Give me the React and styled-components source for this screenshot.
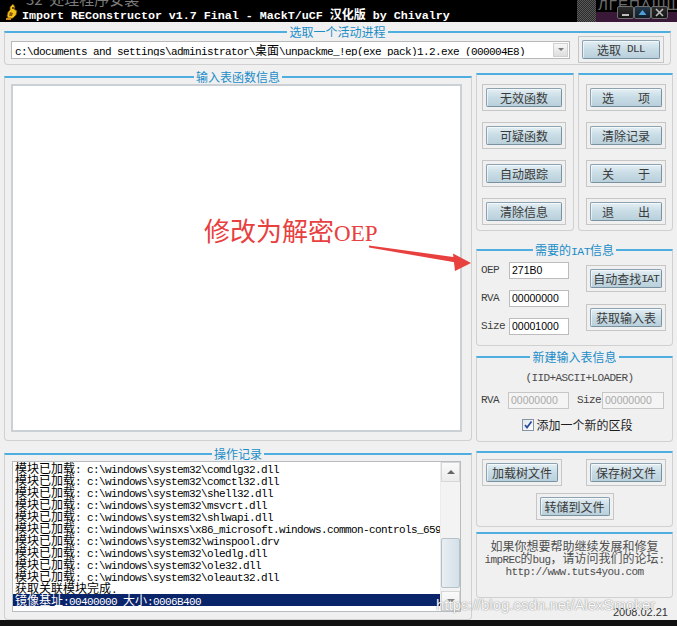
import React from 'react';
import styled, { createGlobalStyle } from 'styled-components';

const CJK = `"Noto Sans CJK SC", "Liberation Sans", sans-serif`;
const MONO = `"Liberation Mono", "Noto Sans CJK SC", monospace`;

const Global = createGlobalStyle`
  html, body { margin: 0; padding: 0; background: #f0f0f0; }
  body { width: 677px; height: 626px; overflow: hidden; font-family: ${CJK}; font-size: 12px; }
  * { box-sizing: border-box; }
`;

const CjkRun = styled.span`
  font-family: ${CJK};
  font-size: ${p => p.$size}px;
`;
const LatinRun = styled.span`
  font-family: ${MONO};
  font-size: ${p => p.$size}px;
  letter-spacing: ${p => (p.$adv - p.$size * 0.6).toFixed(2)}px;
  white-space: pre;
`;

const CJK_RE = /([\u2E80-\u9FFF\uFF00-\uFFEF\u3000-\u303F]+)/;
function Mixed({ text, cjkSize = 12, latinSize = 11, adv = 6 }) {
  return text
    .split(CJK_RE)
    .filter(Boolean)
    .map((part, i) =>
      CJK_RE.test(part) ? (
        <CjkRun key={i} $size={cjkSize}>{part}</CjkRun>
      ) : (
        <LatinRun key={i} $size={latinSize} $adv={adv}>{part}</LatinRun>
      )
    );
}

const Root = styled.div`
  position: relative;
  width: 677px;
  height: 626px;
  overflow: hidden;
  background: #f0f0f0;
  display: flex;
  flex-direction: column;
  font-size: 12px;
`;

/* ---------- title bar ---------- */
const TitleBar = styled.header`
  position: relative;
  flex: 0 0 22px;
  height: 22px;
  background: #000;
  display: flex;
  align-items: center;
  padding: 5px 0 0 5px;
  overflow: hidden;
`;
const Ghost = styled.span`
  position: absolute;
  left: 26px;
  top: -9px;
  color: #7c7c7c;
  font-family: ${CJK};
  font-size: 15px;
  line-height: 16px;
  white-space: pre;
`;
const IconWrap = styled.span`
  align-self: flex-start;
  margin-top: -1px;
  width: 14px;
  height: 16px;
  display: flex;
  position: relative;
`;
const TitleText = styled.h1`
  position: relative;
  margin: 0 0 0 3px;
  color: #fff;
  font-weight: bold;
  font-size: 12px;
  height: 12px;
  line-height: 12px;
  white-space: nowrap;
`;
const BgChecker = styled.span`
  position: absolute;
  left: 577px;
  top: 0;
  width: 19px;
  height: 22px;
  background-image: repeating-conic-gradient(#5a5a5a 0% 25%, #2a2a2a 0% 50%);
  background-size: 2px 2px;
`;
const BgPurple = styled.span`
  position: absolute;
  left: 596px;
  top: 0;
  width: 81px;
  height: 22px;
  background: linear-gradient(#000 0 12px, #3a1838 12px);
  color: #6d6d6d;
  font-family: "Liberation Sans", sans-serif;
  font-size: 15px;
  line-height: 10px;
  letter-spacing: 1px;
  padding-left: 2px;
  overflow: hidden;
  white-space: nowrap;
`;
const WinButtons = styled.div`
  position: absolute;
  left: 617px;
  top: 6px;
  display: flex;
`;
const WinBtn = styled.span`
  width: 17px;
  height: 13px;
  border: 1px solid #6e6e6e;
  border-radius: 2px;
  background: ${p => (p.$blue ? 'linear-gradient(#22384a,#0f1c28)' : 'linear-gradient(#2c2c2c,#141414)')};
  display: flex;
  align-items: center;
  justify-content: center;
`;

/* ---------- body & groups ---------- */
const Body = styled.main`
  flex: 1;
  display: flex;
  flex-direction: column;
  padding: 9px 0 0 4px;
`;
const Group = styled.section`
  width: ${p => (p.$w ? `${p.$w}px` : 'auto')};
  height: ${p => p.$h}px;
  border: 1px solid #d0d0d0;
  border-top: 2px solid #4faee0;
  border-radius: 0 0 4px 4px;
  display: flex;
  flex-direction: column;
  flex-shrink: 0;
  margin-top: ${p => p.$mt || 0}px;
`;
const Legend = styled.h2`
  position: relative;
  margin: -8px auto -6px;
  height: 14px;
  line-height: 14px;
  padding: 0 2px;
  background: #f0f0f0;
  color: #1b8dc8;
  font-family: ${CJK};
  font-size: 12px;
  font-weight: normal;
  white-space: nowrap;
`;

const ProcRow = styled.div`
  display: flex;
  align-items: center;
  justify-content: space-between;
  padding: 3px 6px 0 6px;
`;
const Combo = styled.div`
  width: 559px;
  height: 18px;
  background: #fff;
  border: 1px solid #b8b8b8;
  display: flex;
  align-items: center;
  padding-left: 3px;
`;
const ComboText = styled.div`
  flex: 1;
  height: 12px;
  line-height: 12px;
  font-size: 12px;
  white-space: nowrap;
  overflow: hidden;
  color: #000;
`;
const ComboArrow = styled.div`
  width: 15px;
  height: 14px;
  margin-right: 1px;
  border: 1px solid #d0d0d0;
  background: linear-gradient(#f7f7f7, #dedede);
  display: flex;
  align-items: center;
  justify-content: center;
  &::after {
    content: '';
    border-left: 3px solid transparent;
    border-right: 3px solid transparent;
    border-top: 3px solid #7a7a7a;
  }
`;

const BtnFrame = styled.div`
  display: flex;
  width: fit-content;
  padding: 3px;
  border: 1px solid #c6c6c6;
  background: #f0f0f0;
`;
const Btn = styled.button`
  width: ${p => p.$w}px;
  height: 19px;
  margin: 0;
  padding: 0;
  border: 1px solid #8ca2b0;
  border-right-color: #7892a2;
  border-bottom-color: #7892a2;
  border-radius: 2px;
  background: linear-gradient(#e4eff4, #cadde6 45%, #b9d0db);
  box-shadow: inset 1px 1px 0 rgba(255, 255, 255, 0.6);
  color: #3a3a3a;
  font-family: ${CJK};
  font-size: 12px;
  line-height: 17px;
  white-space: pre;
  display: flex;
  align-items: center;
  justify-content: center;
  cursor: default;
`;

const Main = styled.div`
  display: grid;
  grid-template-columns: 468px 197px;
  column-gap: 4px;
  margin-top: 8px;
  align-items: start;
`;
const LeftCol = styled.div`
  display: flex;
  flex-direction: column;
  padding-top: 3px;
`;
const RightCol = styled.div`
  display: flex;
  flex-direction: column;
`;

const TreeArea = styled.div`
  margin: 6px 9px 0 6px;
  height: 348px;
  background: #fff;
  border: 2px solid #cbd0d4;
`;

/* ---------- log ---------- */
const LogBox = styled.div`
  margin: 6px 10px 0 7px;
  height: 151px;
  border: 1px solid #b7bcc1;
  background: #fff;
  display: flex;
`;
const LogLines = styled.div`
  flex: 1;
  overflow: hidden;
  display: flex;
  flex-direction: column;
`;
const LogLine = styled.div`
  height: 12px;
  line-height: 12px;
  font-size: 12px;
  padding-left: 2px;
  white-space: nowrap;
  color: ${p => (p.$sel ? '#fff' : '#000')};
  background: ${p => (p.$sel ? '#0a246a' : 'transparent')};
`;
const ScrollBar = styled.div`
  width: 20px;
  display: flex;
  flex-direction: column;
  background: #f3f3f3;
  border-left: 1px solid #ececec;
`;
const ScrollBtn = styled.div`
  height: 20px;
  border: 1px solid #d7d7d7;
  background: linear-gradient(#fafafa, #ececec);
  display: flex;
  align-items: center;
  justify-content: center;
  &::after {
    content: '';
    border-left: 4px solid transparent;
    border-right: 4px solid transparent;
    ${p => (p.$up ? 'border-bottom: 4px solid #666;' : 'border-top: 4px solid #888;')}
  }
`;
const ScrollTrack = styled.div`
  flex: 1;
  display: flex;
  flex-direction: column;
  padding-top: 56px;
`;
const Thumb = styled.div`
  height: 50px;
  border: 1px solid #b3c1cb;
  border-radius: 2px;
  background: linear-gradient(90deg, #e9eff3, #d4e0e8);
`;

/* ---------- right column parts ---------- */
const ButtonsRow = styled.div`
  display: flex;
  gap: 4px;
`;
const BtnStack = styled.div`
  display: flex;
  flex-direction: column;
  gap: 11px;
  padding: 9px 0 0 ${p => p.$pl}px;
`;

const IatBody = styled.div`
  display: flex;
  justify-content: space-between;
  padding: 0 6px 0 4px;
`;
const FieldCol = styled.div`
  display: flex;
  flex-direction: column;
  gap: 11px;
  padding-top: 11px;
`;
const BtnCol = styled.div`
  display: flex;
  flex-direction: column;
  gap: 12px;
  padding-top: 14px;
`;
const FieldRow = styled.div`
  display: flex;
  align-items: flex-start;
`;
const Label = styled.span`
  width: ${p => p.$w}px;
  margin-left: ${p => p.$ml || 0}px;
  height: 14px;
  line-height: 12px;
  padding-top: ${p => p.$pt || 0}px;
  font-family: ${MONO};
  font-size: 11px;
  letter-spacing: -0.6px;
  color: #3e3e3e;
  white-space: pre;
`;
const Field = styled.div`
  width: ${p => p.$w}px;
  height: 17px;
  border: 1px solid ${p => (p.$disabled ? '#c6c6c6' : '#bcbcbc')};
  background: ${p => (p.$disabled ? '#f4f4f4' : '#fff')};
  color: ${p => (p.$disabled ? '#a9a9a9' : '#000')};
  font-family: "Liberation Sans", sans-serif;
  font-size: 10.5px;
  line-height: 15px;
  padding-left: 2px;
  white-space: nowrap;
`;

const SubNote = styled.div`
  margin-top: 14px;
  height: 12px;
  line-height: 12px;
  text-align: center;
  padding-left: 10px;
  font-family: ${MONO};
  font-size: 11px;
  letter-spacing: -0.6px;
  color: #4a4a4a;
`;
const NewRow = styled.div`
  display: flex;
  align-items: center;
  padding-left: 4px;
  margin-top: 8px;
`;
const CheckRow = styled.label`
  display: flex;
  align-items: center;
  justify-content: center;
  gap: 2px;
  margin-top: 9px;
  padding-left: 6px;
  height: 13px;
  font-family: ${CJK};
  font-size: 12px;
  line-height: 12px;
  color: #1e1e1e;
`;

const TreeRow = styled.div`
  display: flex;
  justify-content: space-between;
  padding: 6px 6px 0 5px;
`;
const TreeRowCenter = styled.div`
  display: flex;
  justify-content: center;
  margin-top: 7px;
`;

const InfoText = styled.div`
  padding-top: 6px;
  display: flex;
  flex-direction: column;
  align-items: center;
  color: #4e4e4e;
`;
const InfoLine = styled.div`
  height: 12px;
  line-height: 12px;
  font-size: 12px;
  white-space: nowrap;
`;
const DateRow = styled.div`
  margin-top: 8px;
  height: 12px;
  line-height: 12px;
  text-align: right;
  padding-right: 5px;
  font-family: "Liberation Sans", sans-serif;
  font-size: 11px;
  color: #333;
`;

const BottomStrip = styled.footer`
  flex: 0 0 6px;
  background: #111;
`;

/* ---------- overlays ---------- */
const Annotation = styled.div`
  position: absolute;
  left: 204px;
  top: 216px;
  color: #e8403e;
  height: 28px;
  line-height: 28px;
  font-size: 26px;
  white-space: nowrap;
`;
const AnnoCjk = styled.span`
  font-family: ${CJK};
  font-size: 26px;
`;
const AnnoLatin = styled.span`
  font-family: "Liberation Serif", serif;
  font-size: 23px;
`;
const ArrowSvg = styled.svg`
  position: absolute;
  left: 0;
  top: 0;
  pointer-events: none;
`;
const Watermark = styled.div`
  position: absolute;
  left: 436px;
  top: 596px;
  font-family: "Liberation Sans", sans-serif;
  font-size: 15px;
  line-height: 18px;
  color: rgba(255, 255, 255, 0.95);
  text-shadow: 0 0 1px rgba(90, 90, 90, 0.7), 0 0 2px rgba(0, 0, 0, 0.2);
  white-space: nowrap;
  pointer-events: none;
`;

function AppIcon() {
  return (
    <IconWrap>
      <svg width="14" height="16" viewBox="0 0 14 16">
        <path d="M8 0 L10 3 L9 5 L12 7 L11 11 L8 14 L4 15 L2 12 L3 8 L5 6 L5 3 Z" fill="#f2c21b" stroke="#6b4a08" strokeWidth="0.8" />
        <path d="M5 8 L8 9 L7 12 L4 12 Z" fill="#8a5a16" />
        <circle cx="8" cy="4" r="1" fill="#3a2a08" />
        <path d="M1 14 L6 13 L6 16 L1 16 Z" fill="#c98a1a" />
      </svg>
    </IconWrap>
  );
}

const logs = [
  '模块已加载: c:\\windows\\system32\\comdlg32.dll',
  '模块已加载: c:\\windows\\system32\\comctl32.dll',
  '模块已加载: c:\\windows\\system32\\shell32.dll',
  '模块已加载: c:\\windows\\system32\\msvcrt.dll',
  '模块已加载: c:\\windows\\system32\\shlwapi.dll',
  '模块已加载: c:\\windows\\winsxs\\x86_microsoft.windows.common-controls_6595b64144ccf1df_6.0.2600.5512_x-ww_35d4ce83\\comctl32.dll',
  '模块已加载: c:\\windows\\system32\\winspool.drv',
  '模块已加载: c:\\windows\\system32\\oledlg.dll',
  '模块已加载: c:\\windows\\system32\\ole32.dll',
  '模块已加载: c:\\windows\\system32\\oleaut32.dll',
  '获取关联模块完成.',
];

export default function App() {
  return (
    <>
      <Global />
      <Root>
        <TitleBar>
          <Ghost>32  处理程序安装</Ghost>
          <AppIcon />
          <TitleText>
            <Mixed text="Import REConstructor v1.7 Final - MackT/uCF 汉化版 by Chivalry" latinSize={11.7} cjkSize={12} adv={7} />
          </TitleText>
          <BgChecker />
          <BgPurple>ЛГЕПАШШ</BgPurple>
          <WinButtons>
            <WinBtn>
              <svg width="9" height="9" viewBox="0 0 9 9"><rect x="1" y="6" width="7" height="2" fill="#bdbdbd" /></svg>
            </WinBtn>
            <WinBtn $blue>
              <svg width="9" height="9" viewBox="0 0 9 9"><path d="M0.5 7 L4.5 2 L8.5 7 Z" fill="#4f9fd8" /></svg>
            </WinBtn>
            <WinBtn>
              <svg width="9" height="9" viewBox="0 0 9 9"><path d="M1 1 L8 8 M8 1 L1 8" stroke="#bdbdbd" strokeWidth="1.6" /></svg>
            </WinBtn>
          </WinButtons>
        </TitleBar>

        <Body>
          <Group $w={667} $h={34}>
            <Legend>选取一个活动进程</Legend>
            <ProcRow>
              <Combo>
                <ComboText>
                  <Mixed text="c:\documents and settings\administrator\桌面\unpackme_!ep(exe pack)1.2.exe (000004E8)" />
                </ComboText>
                <ComboArrow />
              </Combo>
              <BtnFrame>
                <Btn $w={78}><Mixed text="选取 DLL" /></Btn>
              </BtnFrame>
            </ProcRow>
          </Group>

          <Main>
            <LeftCol>
              <Group $h={365}>
                <Legend>输入表函数信息</Legend>
                <TreeArea />
              </Group>
              <Group $h={167} $mt={12}>
                <Legend>操作记录</Legend>
                <LogBox>
                  <LogLines>
                    {logs.map((l, i) => (
                      <LogLine key={i}><Mixed text={l} /></LogLine>
                    ))}
                    <LogLine $sel><Mixed text="镜像基址:00400000 大小:0006B400" /></LogLine>
                  </LogLines>
                  <ScrollBar>
                    <ScrollBtn $up />
                    <ScrollTrack><Thumb /></ScrollTrack>
                    <ScrollBtn />
                  </ScrollBar>
                </LogBox>
              </Group>
            </LeftCol>

            <RightCol>
              <ButtonsRow>
                <Group $w={98} $h={158}>
                  <BtnStack $pl={5}>
                    {['无效函数', '可疑函数', '自动跟踪', '清除信息'].map(t => (
                      <BtnFrame key={t}><Btn $w={76}>{t}</Btn></BtnFrame>
                    ))}
                  </BtnStack>
                </Group>
                <Group $w={95} $h={158}>
                  <BtnStack $pl={7}>
                    {['选　　项', '清除记录', '关　　于', '退　　出'].map(t => (
                      <BtnFrame key={t}><Btn $w={72}>{t}</Btn></BtnFrame>
                    ))}
                  </BtnStack>
                </Group>
              </ButtonsRow>

              <Group $h={97} $mt={18}>
                <Legend><Mixed text="需要的IAT信息" latinSize={11.5} adv={6.3} /></Legend>
                <IatBody>
                  <FieldCol>
                    <FieldRow><Label $w={28} $pt={2}>OEP</Label><Field $w={60}>271B0</Field></FieldRow>
                    <FieldRow><Label $w={28} $pt={2}>RVA</Label><Field $w={60}>00000000</Field></FieldRow>
                    <FieldRow><Label $w={28} $pt={2}>Size</Label><Field $w={60}>00001000</Field></FieldRow>
                  </FieldCol>
                  <BtnCol>
                    <BtnFrame><Btn $w={72}><Mixed text="自动查找IAT" latinSize={11.5} adv={5.8} /></Btn></BtnFrame>
                    <BtnFrame><Btn $w={72}>获取输入表</Btn></BtnFrame>
                  </BtnCol>
                </IatBody>
              </Group>

              <Group $h={86} $mt={10}>
                <Legend>新建输入表信息</Legend>
                <SubNote>(IID+ASCII+LOADER)</SubNote>
                <NewRow>
                  <Label $w={27}>RVA</Label>
                  <Field $w={61} $disabled>00000000</Field>
                  <Label $w={25} $ml={8}>Size</Label>
                  <Field $w={62} $disabled>00000000</Field>
                </NewRow>
                <CheckRow>
                  <svg width="12" height="12" viewBox="0 0 12 12">
                    <defs>
                      <linearGradient id="cbg" x1="0" y1="0" x2="1" y2="1">
                        <stop offset="0" stopColor="#dfe4ea" />
                        <stop offset="1" stopColor="#ffffff" />
                      </linearGradient>
                    </defs>
                    <rect x="0.5" y="0.5" width="11" height="11" fill="url(#cbg)" stroke="#8594a6" />
                    <path d="M3 6 L5 8.5 L9.5 2.5" fill="none" stroke="#2a4d9a" strokeWidth="1.8" />
                  </svg>
                  添加一个新的区段
                </CheckRow>
              </Group>

              <Group $h={76} $mt={9}>
                <TreeRow>
                  <BtnFrame><Btn $w={72}>加载树文件</Btn></BtnFrame>
                  <BtnFrame><Btn $w={72}>保存树文件</Btn></BtnFrame>
                </TreeRow>
                <TreeRowCenter>
                  <BtnFrame><Btn $w={70}>转储到文件</Btn></BtnFrame>
                </TreeRowCenter>
              </Group>

              <Group $h={66} $mt={5}>
                <InfoText>
                  <InfoLine><Mixed text="如果你想要帮助继续发展和修复" /></InfoLine>
                  <InfoLine><Mixed text="impREC的bug，请访问我们的论坛:" /></InfoLine>
                  <InfoLine><Mixed text="http://www.tuts4you.com" /></InfoLine>
                </InfoText>
              </Group>

              <DateRow>2008.02.21</DateRow>
            </RightCol>
          </Main>
        </Body>
        <BottomStrip />

        <Annotation>
          <AnnoCjk>修改为解密</AnnoCjk>
          <AnnoLatin>OEP</AnnoLatin>
        </Annotation>
        <ArrowSvg width="677" height="626" viewBox="0 0 677 626">
          <path d="M369 245.5 L457 257.5 L456 262.5 L369 247.5 Z" fill="#e8403e" />
          <path d="M453 253.5 L471 263 L455 271 Z" fill="#e8403e" />
        </ArrowSvg>
        <Watermark>https://blog.csdn.net/AlexSmoker</Watermark>
      </Root>
    </>
  );
}
